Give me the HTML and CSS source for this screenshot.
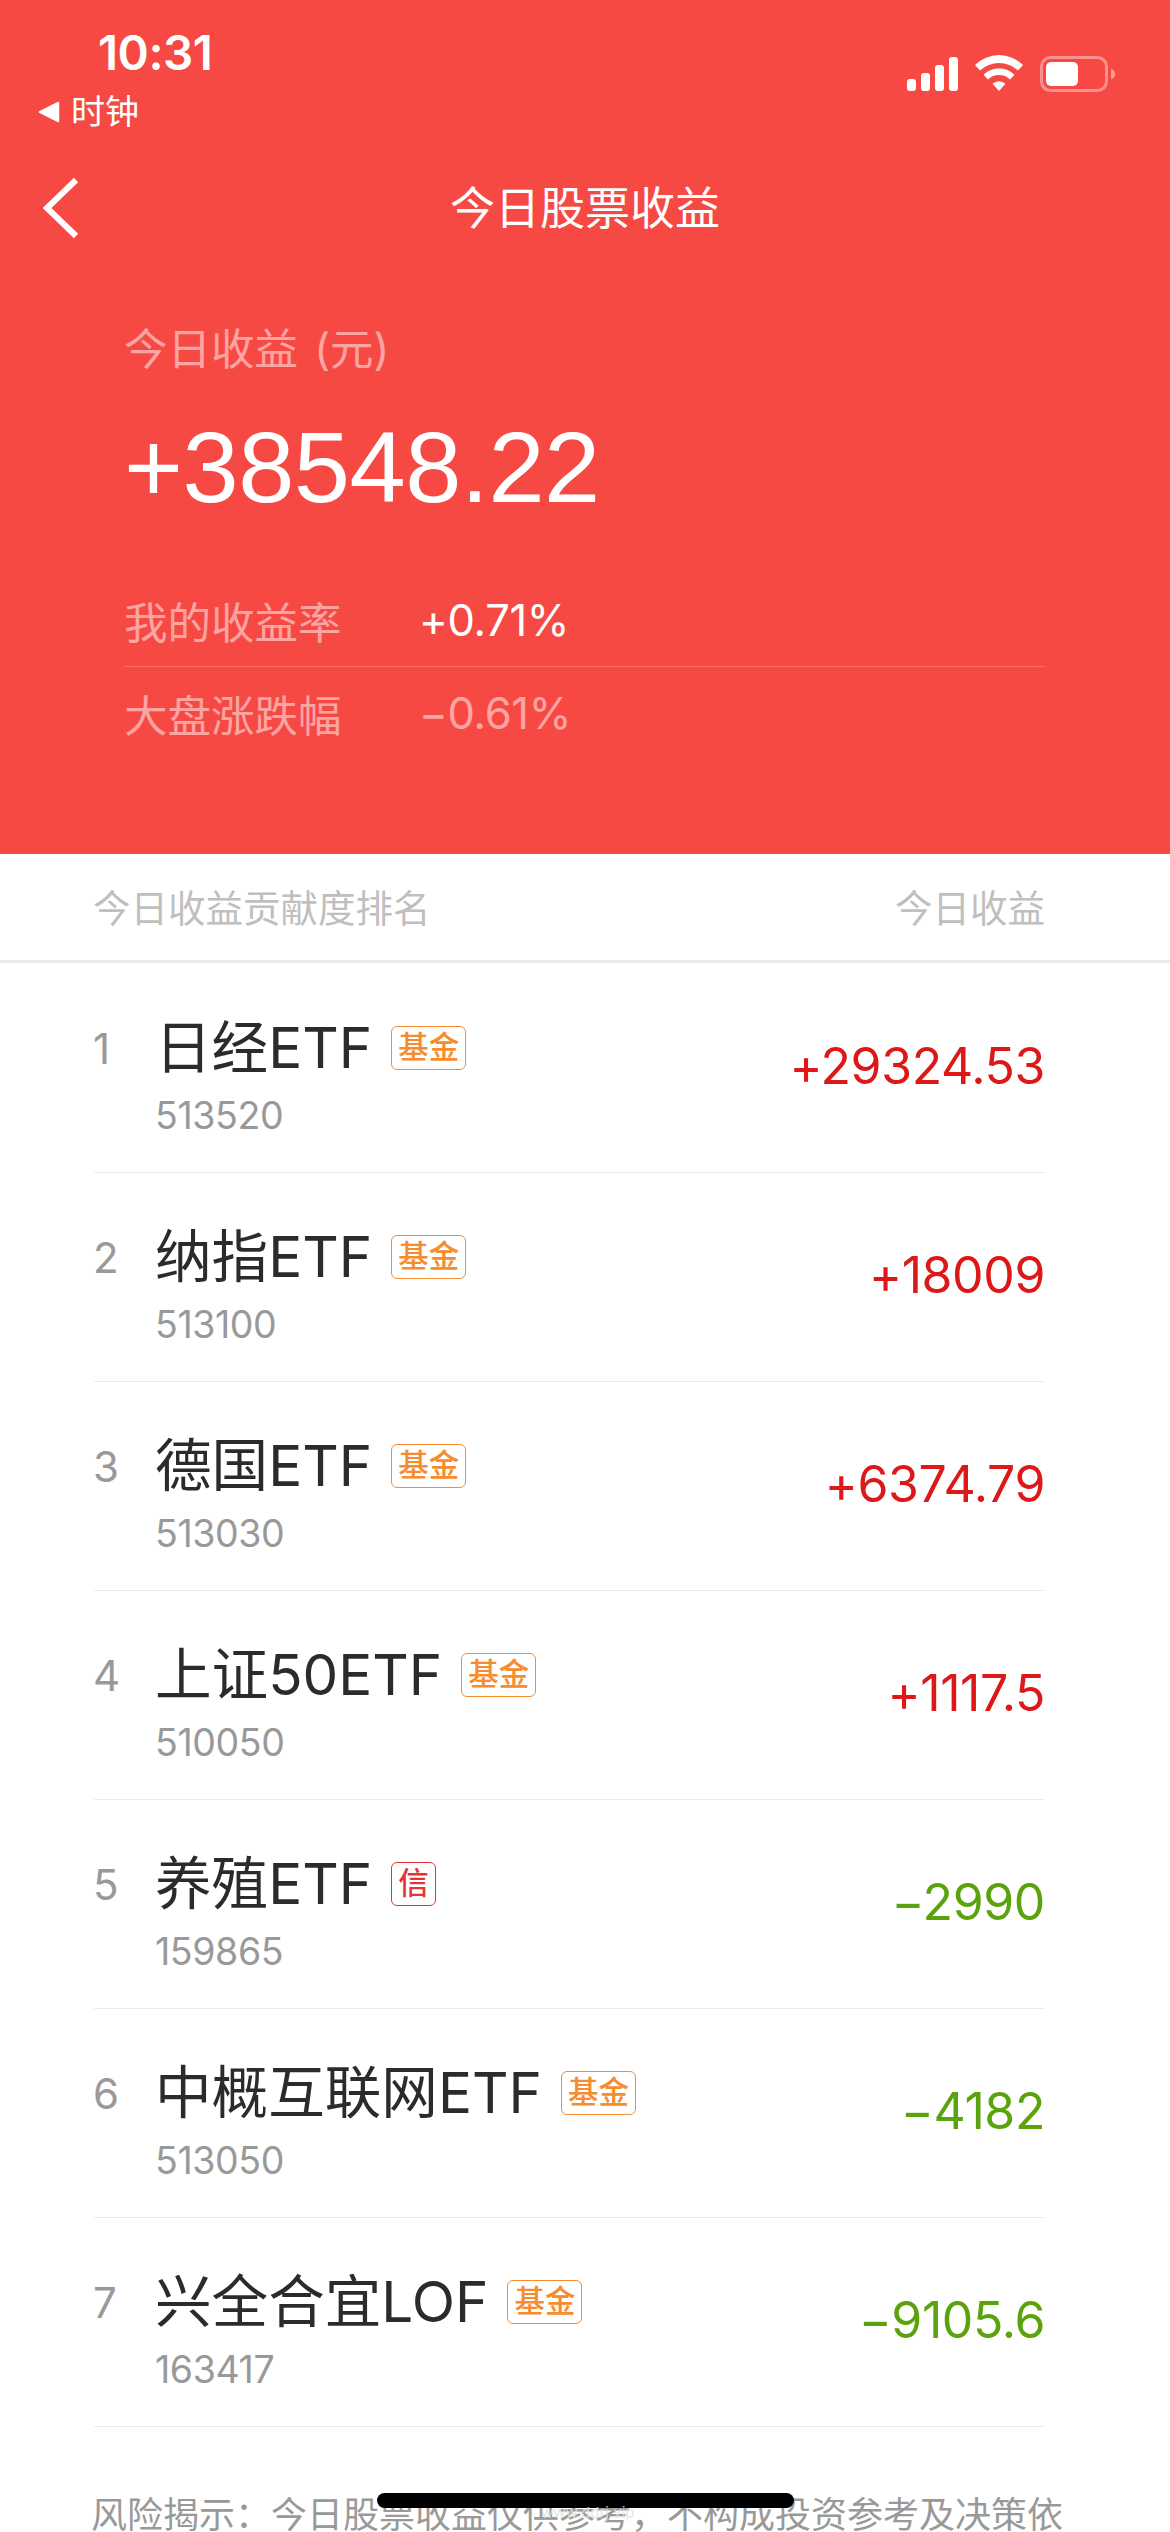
FILE: index.html
```html
<!DOCTYPE html>
<html lang="zh-CN">
<head>
  <meta charset="UTF-8">
  <meta name="viewport" content="width=device-width, initial-scale=1.0">
  <title>今日股票收益</title>
  <link rel="stylesheet" href="styles.css">
</head>
<body>
  <div class="screen">
    <!-- Red header -->
    <div class="hero">
      <div class="status-bar">
        <div class="status-left">
          <div class="time">10:31</div>
          <div class="back-app">
            <svg width="22" height="22" viewBox="0 0 22 22"><path d="M2 11 L20 2 V20 Z" fill="#fff" stroke="#fff" stroke-width="2.5" stroke-linejoin="round"/></svg>
            <span>时钟</span>
          </div>
        </div>
        <svg class="status-icons" width="210" height="40" viewBox="0 0 210 40">
          <g fill="#fff">
            <rect x="0" y="24" width="9" height="12" rx="3"/>
            <rect x="14" y="18" width="9" height="18" rx="3"/>
            <rect x="28" y="10" width="9" height="26" rx="3"/>
            <rect x="42" y="2" width="9" height="34" rx="3"/>
            <path d="M68 10 A34 34 0 0 1 116 10 L111 15.500 A28 28 0 0 0 73 15.500 Z"/>
            <path d="M76.500 19.700 A22 22 0 0 1 107.500 19.700 L103 24.500 A16 16 0 0 0 81 24.500 Z"/>
            <path d="M85.500 28.800 A9.500 9.500 0 0 1 98.500 28.800 L92 36 Z"/>
            <rect x="139" y="7" width="32" height="24" rx="5"/>
          </g>
          <rect x="134.500" y="2.500" width="65" height="33" rx="9" fill="none" stroke="#fff" stroke-opacity=".4" stroke-width="3"/>
          <path d="M204 13.500 Q208 15 208 19 Q208 23 204 24.500 Z" fill="#fff" fill-opacity=".45"/>
        </svg>
      </div>

      <div class="nav-bar">
        <svg class="nav-back" width="40" height="62" viewBox="0 0 40 62"><path d="M35 3 L6 31 L35 59" fill="none" stroke="#fff" stroke-width="6"/></svg>
        <div class="nav-title">今日股票收益</div>
      </div>

      <div class="summary">
        <div class="summary-label">今日收益 (元)</div>
        <div class="summary-total">+38548.22</div>
        <div class="rate">
          <span class="rate-name">我的收益率</span>
          <span class="rate-value">+0.71%</span>
        </div>
        <div class="rate rate-market">
          <span class="rate-name">大盘涨跌幅</span>
          <span class="rate-value">−0.61%</span>
        </div>
      </div>
    </div>

    <!-- Ranking -->
    <div class="list-head">
      <span>今日收益贡献度排名</span>
      <span>今日收益</span>
    </div>
    <div class="list">
      <div class="item">
        <div class="rank">1</div>
        <div class="stock">
          <div class="name">日经ETF<span class="tag">基金</span></div>
          <div class="code">513520</div>
        </div>
        <div class="amount up">+29324.53</div>
      </div>
      <div class="item">
        <div class="rank">2</div>
        <div class="stock">
          <div class="name">纳指ETF<span class="tag">基金</span></div>
          <div class="code">513100</div>
        </div>
        <div class="amount up">+18009</div>
      </div>
      <div class="item">
        <div class="rank">3</div>
        <div class="stock">
          <div class="name">德国ETF<span class="tag">基金</span></div>
          <div class="code">513030</div>
        </div>
        <div class="amount up">+6374.79</div>
      </div>
      <div class="item">
        <div class="rank">4</div>
        <div class="stock">
          <div class="name">上证50ETF<span class="tag">基金</span></div>
          <div class="code">510050</div>
        </div>
        <div class="amount up">+1117.5</div>
      </div>
      <div class="item">
        <div class="rank">5</div>
        <div class="stock">
          <div class="name">养殖ETF<span class="tag tag-credit">信</span></div>
          <div class="code">159865</div>
        </div>
        <div class="amount down">−2990</div>
      </div>
      <div class="item">
        <div class="rank">6</div>
        <div class="stock">
          <div class="name">中概互联网ETF<span class="tag">基金</span></div>
          <div class="code">513050</div>
        </div>
        <div class="amount down">−4182</div>
      </div>
      <div class="item">
        <div class="rank">7</div>
        <div class="stock">
          <div class="name">兴全合宜LOF<span class="tag">基金</span></div>
          <div class="code">163417</div>
        </div>
        <div class="amount down">−9105.6</div>
      </div>
    </div>

    <div class="risk-tip">风险揭示：今日股票收益仅供参考，不构成投资参考及决策依</div>

    <div class="home-indicator"></div>
    <div class="watermark">www.ddrj.vip</div>
  </div>
</body>
</html>
```
FILE: styles.css
```css
body {
  margin: 0;
  background-color: #fff;
  font-family: Inter, "Noto Sans CJK SC", sans-serif;
}
.screen {
  position: relative;
  width: 1170px;
  height: 2532px;
  overflow: hidden;
}

/* Header */
.hero {
  height: 854px;
  background-color: #f74943;
  color: #fff;
}
.status-bar {
  display: flex;
  justify-content: space-between;
  height: 141px;
}
.status-left {
  padding: 28px 0 0 38px;
}
.time {
  padding-left: 60px;
  font-size: 47.5px;
  font-weight: 600;
  line-height: 50px;
  letter-spacing: -0.5px;
}
.back-app {
  display: flex;
  align-items: center;
  gap: 11px;
  margin-top: 14px;
  font-size: 34px;
  line-height: 40px;
}
.status-icons {
  margin: 55px 53px 0 0;
}
.nav-bar {
  display: grid;
  grid-template-columns: 120px 1fr 120px;
  align-items: center;
  height: 134px;
}
.nav-back {
  margin-left: 41px;
}
.nav-title {
  padding-top: 2px;
  font-size: 45px;
  line-height: 60px;
  text-align: center;
}
.summary {
  padding: 44px 125px 0 124px;
}
.summary-label {
  font-size: 43.5px;
  line-height: 60px;
  word-spacing: 4px;
  opacity: .5;
}
.summary-total {
  margin-top: 28px;
  font-family: "Liberation Sans", sans-serif;
  font-size: 101px;
  line-height: 120px;
  letter-spacing: -0.5px;
}
.rate {
  display: flex;
  align-items: center;
  height: 92px;
  font-size: 43.5px;
}
.summary-total + .rate {
  margin-top: 47px;
  border-bottom: 1px solid rgba(255,255,255,0.2);
}
.rate-name {
  width: 295px;
  opacity: .5;
}
.rate-value {
  letter-spacing: -0.3px;
}
.rate-market .rate-value {
  opacity: .5;
}

/* Ranking list */
.list-head {
  display: flex;
  justify-content: space-between;
  align-items: center;
  box-sizing: border-box;
  height: 109px;
  padding: 0 125px 4px 93px;
  border-bottom: 3px solid #ebebeb;
  color: #bfbfbf;
  font-size: 37.5px;
}
.list {
  padding: 1px 125px 0 94px;
}
.item {
  display: flex;
  height: 208px;
  border-bottom: 1px solid #ebebeb;
}
.rank {
  width: 61px;
  padding-top: 59px;
  color: #999;
  font-size: 42px;
  line-height: 52px;
  text-indent: -1px;
}
.stock {
  flex: 1;
  padding-top: 43px;
}
.name {
  display: flex;
  align-items: center;
  height: 72px;
  color: #2b2b2b;
  font-size: 56.6px;
}
.tag {
  box-sizing: border-box;
  height: 44px;
  margin: 9px 0 0 19px;
  padding: 0 6px;
  border: 1.5px solid #f78c2f;
  border-radius: 6px;
  color: #f78c2f;
  font-size: 30.5px;
  font-weight: 500;
  line-height: 40px;
}
.tag-credit {
  border-color: #e33535;
  color: #e33535;
}
.code {
  margin-top: 13px;
  color: #999;
  font-size: 37.5px;
  line-height: 48px;
  letter-spacing: -0.4px;
}
.amount {
  padding-top: 71px;
  font-size: 50px;
  line-height: 62px;
  letter-spacing: -0.4px;
}
.up {
  color: #dd1818;
}
.down {
  color: #5aa30c;
}

.risk-tip {
  padding: 61px 0 0 91px;
  color: #999;
  font-size: 36px;
  line-height: 54px;
  white-space: nowrap;
}
.home-indicator {
  position: absolute;
  left: 377px;
  bottom: 24px;
  width: 417px;
  height: 15px;
  border-radius: 8px;
  background-color: #000;
}
.watermark {
  position: absolute;
  left: 541px;
  bottom: 10px;
  color: rgba(225,225,225,0.85);
  font-size: 15px;
  line-height: 18px;
}
```
